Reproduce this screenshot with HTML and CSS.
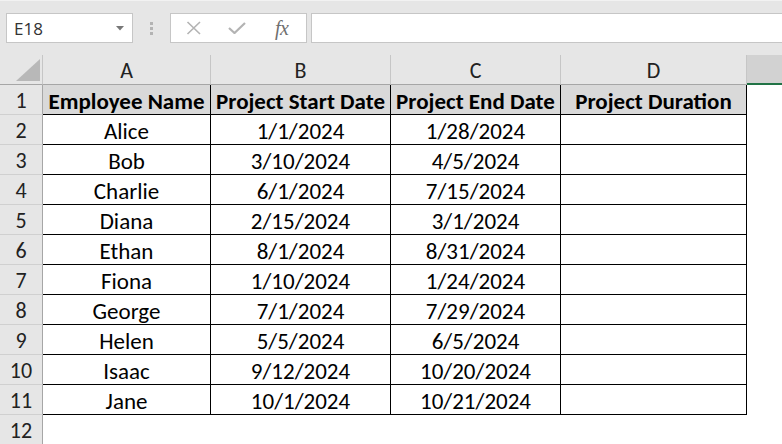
FILE: index.html
```html
<!DOCTYPE html>
<html>
<head>
<meta charset="utf-8">
<link rel="stylesheet" href="styles.css">
</head>
<body>
<div class="app">
  <div class="toolbar">
    <div class="namebox">
      <span class="name">E18</span>
      <svg class="caret" width="8" height="5" viewBox="0 0 8 5"><path d="M0 0H8L4 4.5Z" fill="#777"/></svg>
    </div>
    <div class="grip"><span></span><span></span><span></span></div>
    <div class="fxbox">
      <svg class="ico" width="16" height="14" viewBox="0 0 16 14"><path d="M1.5 1L14 13M14 1L1.5 13" stroke="#b3b3b3" stroke-width="1.6" fill="none"/></svg>
      <svg class="ico" width="18" height="12" viewBox="0 0 18 12"><path d="M1 6L6.5 11L17 1" stroke="#b3b3b3" stroke-width="2.2" fill="none"/></svg>
      <span class="fx">fx</span>
    </div>
    <div class="formula"></div>
  </div>
  <div class="sheet">
    <div class="corner"><svg width="24" height="22" viewBox="0 0 24 22"><path d="M0 22H24V0Z" fill="#b8b8b8"/></svg></div>
    <div class="ch">A</div><div class="ch">B</div><div class="ch">C</div><div class="ch">D</div><div class="ch sel"></div>

    <div class="rh">1</div><div class="c hd">Employee Name</div><div class="c hd">Project Start Date</div><div class="c hd">Project End Date</div><div class="c hd">Project Duration</div><div class="e"></div>
    <div class="rh">2</div><div class="c">Alice</div><div class="c">1/1/2024</div><div class="c">1/28/2024</div><div class="c"></div><div class="e"></div>
    <div class="rh">3</div><div class="c">Bob</div><div class="c">3/10/2024</div><div class="c">4/5/2024</div><div class="c"></div><div class="e"></div>
    <div class="rh">4</div><div class="c">Charlie</div><div class="c">6/1/2024</div><div class="c">7/15/2024</div><div class="c"></div><div class="e"></div>
    <div class="rh">5</div><div class="c">Diana</div><div class="c">2/15/2024</div><div class="c">3/1/2024</div><div class="c"></div><div class="e"></div>
    <div class="rh">6</div><div class="c">Ethan</div><div class="c">8/1/2024</div><div class="c">8/31/2024</div><div class="c"></div><div class="e"></div>
    <div class="rh">7</div><div class="c">Fiona</div><div class="c">1/10/2024</div><div class="c">1/24/2024</div><div class="c"></div><div class="e"></div>
    <div class="rh">8</div><div class="c">George</div><div class="c">7/1/2024</div><div class="c">7/29/2024</div><div class="c"></div><div class="e"></div>
    <div class="rh">9</div><div class="c">Helen</div><div class="c">5/5/2024</div><div class="c">6/5/2024</div><div class="c"></div><div class="e"></div>
    <div class="rh">10</div><div class="c">Isaac</div><div class="c">9/12/2024</div><div class="c">10/20/2024</div><div class="c"></div><div class="e"></div>
    <div class="rh">11</div><div class="c">Jane</div><div class="c">10/1/2024</div><div class="c">10/21/2024</div><div class="c"></div><div class="e"></div>
    <div class="rh">12</div><div class="e"></div><div class="e"></div><div class="e"></div><div class="e"></div><div class="e"></div>
  </div>
</div>
</body>
</html>
```

FILE: styles.css
```css
* { box-sizing: border-box; }
html, body { margin: 0; padding: 0; background: #fff; }
body { font-family: Carlito, Calibri, Lato, "Liberation Sans", sans-serif; color: #000; overflow: hidden; }
.app { width: 782px; height: 444px; overflow: hidden; background: #e6e6e6; }

.toolbar {
  height: 55px;
  display: flex;
  align-items: flex-start;
  padding-top: 12px;
  padding-left: 6px;
  border-top: 1px solid #f2f2f2;
}
.namebox {
  width: 127px; height: 30px;
  background: #fff;
  border: 1px solid #c6c6c6;
  display: flex; align-items: center; justify-content: space-between;
  padding: 0 8px 0 7px;
}
.name { font-size: 17px; color: #333; font-family: "Segoe UI", "Open Sans", "Noto Sans", sans-serif; }
.caret { margin-top: 1px; }
.grip {
  width: 37px; height: 30px;
  display: flex; flex-direction: column; align-items: center; justify-content: center; gap: 2px;
}
.grip span { width: 3px; height: 3px; background: #b3b3b3; }
.fxbox {
  width: 137px; height: 30px;
  background: #fff;
  border: 1px solid #c6c6c6;
  display: flex; align-items: center;
  padding-left: 15px; gap: 26px;
}
.ico { display: block; }
.fx { font-family: "Liberation Serif", serif; font-style: italic; font-size: 20px; color: #6f6f6f; margin-left: 3px; letter-spacing: -0.5px; }
.formula {
  flex: 1; height: 30px; margin-left: 4px;
  background: #fff;
  border: 1px solid #c6c6c6; border-right: none;
}

.sheet {
  display: grid;
  grid-template-columns: 43px 168px 180px 170px 186px 1fr;
  grid-auto-rows: 30px;
  background: #fff;
}
.corner {
  background: #e6e6e6;
  border-right: 1px solid #c6c6c6;
  border-bottom: 1px solid #a6a6a6;
  display: flex; align-items: flex-end; justify-content: flex-end;
  padding: 0 2px 3px 0;
}
.corner svg { display: block; }
.ch {
  background: #e6e6e6;
  border-right: 1px solid #c6c6c6;
  border-bottom: 1px solid #a6a6a6;
  display: flex; align-items: center; justify-content: center;
  font-size: 22px; color: #222;
  padding-top: 2px;
}
.ch.sel { background: #d2d2d2; border-right: none; border-bottom: 2px solid #217346; }
.rh {
  background: #e6e6e6;
  border-right: 1px solid #a6a6a6;
  border-bottom: 1px solid #d0d0d0;
  display: flex; align-items: center; justify-content: center;
  font-size: 22px; color: #222;
  padding-top: 2px;
}
.c {
  border-right: 1px solid #000;
  border-bottom: 1px solid #000;
  display: flex; align-items: center; justify-content: center;
  font-size: 23px; white-space: nowrap;
  padding-top: 2px;
}
.c.hd { background: #d9d9d9; font-weight: bold; }
.e { background: #fff; }
```
